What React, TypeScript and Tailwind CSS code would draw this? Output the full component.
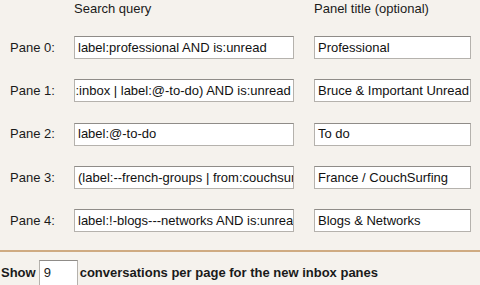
import React from 'react';

const panes = [
    { query: 'label:professional AND is:unread', title: 'Professional', scroll: 0 },
    { query: '(in:inbox | label:@-to-do) AND is:unread', title: 'Bruce & Important Unread', scroll: 1 },
    { query: 'label:@-to-do', title: 'To do', scroll: 0 },
    { query: '(label:--french-groups | from:couchsurfing)', title: 'France / CouchSurfing', scroll: 0 },
    { query: 'label:!-blogs---networks AND is:unread', title: 'Blogs & Networks', scroll: 0 },
];

const inputCls =
    'h-[23px] bg-white border border-[#b5b2ad] border-t-[#8f8c88] px-[3px] text-[13px] text-[#111] outline-none overflow-hidden whitespace-nowrap';

export default function App() {
    return (
        <div
            className="w-[480px] h-[285px] overflow-hidden bg-[#f5f2ed] text-[#1a1a1a] text-[13px]"
            style={{ fontFamily: '"Liberation Sans", Arial, sans-serif' }}
        >
            {/* Column headers */}
            <div className="flex h-[36px] leading-[16px] pt-[1px]">
                <div className="w-[74px]" />
                <div className="w-[240px]">Search query</div>
                <div>Panel title (optional)</div>
            </div>

            {/* Pane rows */}
            <div className="flex flex-col gap-y-[20.25px]">
                {panes.map((p, i) => (
                    <div key={i} className="flex items-center h-[23px]">
                        <div className="w-[74px] pl-[10px]">Pane {i}:</div>
                        <div className={`${inputCls} w-[220px] flex items-center`}>
                            <span className={p.scroll ? 'ml-[-17px]' : ''}>{p.query}</span>
                        </div>
                        <div className="w-[20px]" />
                        <div className={`${inputCls} w-[157px] flex items-center`}>
                            <span>{p.title}</span>
                        </div>
                    </div>
                ))}
            </div>

            {/* Divider */}
            <div className="mt-[18px] h-[2px] bg-[#cfab82]" />

            {/* Per-page setting */}
            <div className="flex items-center mt-[8px] font-bold">
                <span className="pl-[1px] pr-[3px]">Show</span>
                <div className="h-[26px] w-[39px] bg-white border border-[#b5b2ad] border-t-[#8f8c88] px-[4px] flex items-center font-normal">
                    9
                </div>
                <span className="pl-[2px]">conversations per page for the new inbox panes</span>
            </div>
        </div>
    );
}
